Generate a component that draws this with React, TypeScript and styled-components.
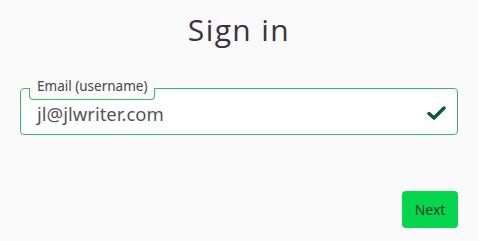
import React from "react";
import styled, { createGlobalStyle } from "styled-components";

const Global = createGlobalStyle`
  html, body { margin: 0; padding: 0; background: #fafafa; }
  body { font-family: "Noto Sans", "Open Sans", sans-serif; }
  * { box-sizing: border-box; }
`;

const Page = styled.div`
  width: 478px;
  height: 241px;
  background: #fafafa;
  padding: 10px 20px 0 20px;
  display: flex;
  flex-direction: column;
`;

const Title = styled.h1`
  margin: 0;
  height: 40px;
  text-align: center;
  font-family: "Open Sans", sans-serif;
  font-weight: 400;
  font-size: 30px;
  line-height: 40px;
  letter-spacing: 1.4px;
  color: #3a3240;
`;

const Field = styled.div`
  position: relative;
  margin-top: 38px;
  height: 47px;
  width: 438px;
  border: 1px solid #3dbb5c;
  border-radius: 4px;
  background: #ffffff;
  display: flex;
  align-items: center;
  padding: 0 12px 0 16px;
`;

const Legend = styled.label`
  position: absolute;
  left: 8px;
  top: -11px;
  padding: 0 8px;
  font-family: "Noto Sans", sans-serif;
  font-size: 13.5px;
  line-height: 17px;
  color: #454545;
  z-index: 1;
  &::before {
    content: "";
    position: absolute;
    left: 0;
    right: 0;
    top: 10px;
    height: 11px;
    background: #fafafa;
    border: 1px solid #3dbb5c;
    border-top: none;
    border-radius: 0 0 4px 4px;
    z-index: -1;
  }
`;

const Value = styled.span`
  flex: 1;
  margin-top: 4px;
  font-family: "Noto Sans", sans-serif;
  font-size: 18.5px;
  color: #555555;
`;

const Check = styled.svg`
  width: 19px;
  height: 14px;
  margin-top: 2px;
  margin-right: -1px;
`;

const Footer = styled.div`
  margin-top: 56px;
  display: flex;
  justify-content: flex-end;
`;

const Button = styled.button`
  width: 56px;
  height: 37px;
  border: none;
  border-radius: 4px;
  background: #06d64d;
  color: #1c3a26;
  font-family: "Noto Sans", sans-serif;
  font-size: 14px;
  padding: 0;
  cursor: pointer;
`;

export default function App() {
  return (
    <>
      <Global />
      <Page>
        <Title>Sign in</Title>
        <Field>
          <Legend>Email (username)</Legend>
          <Value>jl@jlwriter.com</Value>
          <Check viewBox="0 0 19 14">
            <path
              d="M2 7.5 L7 12 L17 2"
              fill="none"
              stroke="#0d5a2b"
              strokeWidth="3.4"
              strokeLinecap="round"
              strokeLinejoin="round"
            />
          </Check>
        </Field>
        <Footer>
          <Button>Next</Button>
        </Footer>
      </Page>
    </>
  );
}
